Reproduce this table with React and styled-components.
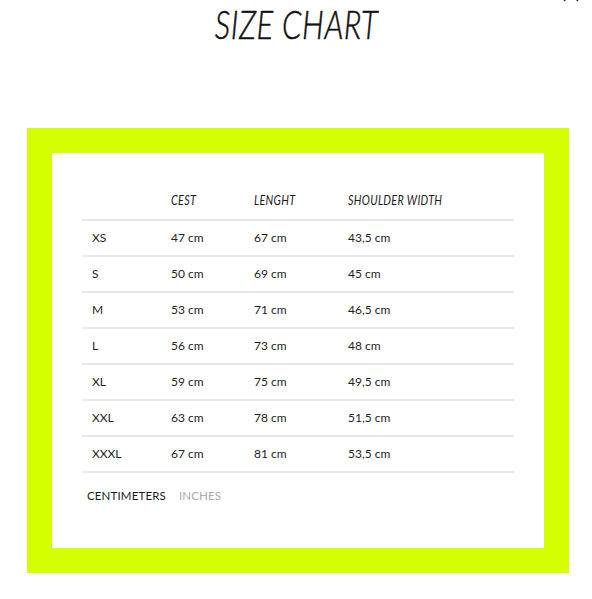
import React from "react";
import styled, { createGlobalStyle } from "styled-components";

const Global = createGlobalStyle`
  html, body { margin: 0; padding: 0; background: #fff; }
  body { font-family: "Lato", "Liberation Sans", sans-serif; color: #222; }
`;

const Page = styled.div`
  position: relative;
  width: 592px;
  height: 599px;
  overflow: hidden;
`;

const Close = styled.svg`
  position: absolute;
  top: -14px;
  right: 13px;
`;

const TitleWrap = styled.div`
  height: 128px;
  display: flex;
  justify-content: center;
  align-items: flex-start;
`;

const Title = styled.h1`
  margin: 0;
  padding: 0 8px;
  font-family: "Lato", sans-serif;
  font-weight: 300;
  font-style: italic;
  font-size: 40px;
  line-height: 48px;
  letter-spacing: 0.7px;
  color: #111;
  transform: scaleX(0.775);
  transform-origin: center top;
  white-space: nowrap;
  -webkit-text-stroke: 0.5px #111;
`;

const Frame = styled.div`
  margin-left: 27px;
  width: 542px;
  height: 445px;
  box-sizing: border-box;
  background: #d4ff00;
  padding: 25px;
`;

const Card = styled.div`
  background: #fff;
  height: 100%;
  box-sizing: border-box;
  padding: 28px 30px 0;
`;

const Row = styled.div`
  display: grid;
  grid-template-columns: 89px 83px 94px 1fr;
  align-items: center;
  height: ${(p) => (p.$head ? 38 : 34)}px;
  border-bottom: 2px solid #e9e9e9;
`;

const Cell = styled.div`
  font-size: 12px;
  color: #1e1e1e;
  padding-left: ${(p) => (p.$first ? 10 : 0)}px;
  margin-top: -1px;
  white-space: nowrap;
`;

const Head = styled.div`
  font-family: "Lato", sans-serif;
  font-style: italic;
  font-size: 13.5px;
  color: #1a1a1a;
  letter-spacing: 0.4px;
  padding-right: 4px;
  transform: scaleX(0.8);
  transform-origin: left center;
  white-space: nowrap;
`;

const Units = styled.div`
  display: flex;
  gap: 13px;
  padding: 16px 0 0 5px;
`;

const Unit = styled.span`
  font-size: 11.5px;
  letter-spacing: 0.15px;
  color: ${(p) => (p.$active ? "#1a1a1a" : "#aaaaaa")};
`;

const rows = [
  ["XS", "47 cm", "67 cm", "43,5 cm"],
  ["S", "50 cm", "69 cm", "45 cm"],
  ["M", "53 cm", "71 cm", "46,5 cm"],
  ["L", "56 cm", "73 cm", "48 cm"],
  ["XL", "59 cm", "75 cm", "49,5 cm"],
  ["XXL", "63 cm", "78 cm", "51,5 cm"],
  ["XXXL", "67 cm", "81 cm", "53,5 cm"],
];

export default function App() {
  return (
    <Page>
      <Global />
      <Close width="16" height="16" viewBox="0 0 16 16">
        <path d="M1 1 L15 15 M15 1 L1 15" stroke="#222" strokeWidth="1.4" />
      </Close>
      <TitleWrap>
        <Title>SIZE CHART</Title>
      </TitleWrap>
      <Frame>
        <Card>
          <Row $head>
            <div />
            <Head>CEST</Head>
            <Head>LENGHT</Head>
            <Head>SHOULDER WIDTH</Head>
          </Row>
          {rows.map((r) => (
            <Row key={r[0]}>
              <Cell $first>{r[0]}</Cell>
              <Cell>{r[1]}</Cell>
              <Cell>{r[2]}</Cell>
              <Cell>{r[3]}</Cell>
            </Row>
          ))}
          <Units>
            <Unit $active>CENTIMETERS</Unit>
            <Unit>INCHES</Unit>
          </Units>
        </Card>
      </Frame>
    </Page>
  );
}
